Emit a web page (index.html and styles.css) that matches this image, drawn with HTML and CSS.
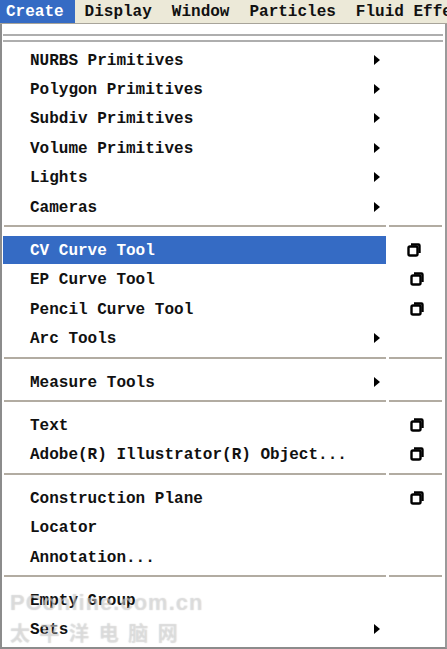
FILE: index.html
```html
<!DOCTYPE html>
<html lang="en">
  <head>
    <meta charset="UTF-8" />
    <title>Create Menu</title>
    <link rel="stylesheet" href="styles.css">
  </head>
  <body>
    <div class="menubar">
      <span class="menubar-item active">Create</span>
      <span class="menubar-item">Display</span>
      <span class="menubar-item">Window</span>
      <span class="menubar-item">Particles</span>
      <span class="menubar-item">Fluid Effects</span>
    </div>

    <div class="menu">
      <div class="tearoff"></div>

      <div class="item"><span class="label">NURBS Primitives</span><span class="arrow"></span><span class="opt"></span></div>
      <div class="item"><span class="label">Polygon Primitives</span><span class="arrow"></span><span class="opt"></span></div>
      <div class="item"><span class="label">Subdiv Primitives</span><span class="arrow"></span><span class="opt"></span></div>
      <div class="item"><span class="label">Volume Primitives</span><span class="arrow"></span><span class="opt"></span></div>
      <div class="item"><span class="label">Lights</span><span class="arrow"></span><span class="opt"></span></div>
      <div class="item"><span class="label">Cameras</span><span class="arrow"></span><span class="opt"></span></div>

      <div class="sep"><span></span><span></span></div>

      <div class="item selected"><span class="label">CV Curve Tool</span><span class="opt">
        <svg viewBox="0 0 14 14" width="14" height="14"><path d="M4 1.5h7.5a1 1 0 0 1 1 1V10" fill="none" stroke="#000" stroke-width="2.4"/><rect x="1.5" y="3.5" width="9" height="9" rx="1.5" fill="#fff" stroke="#000" stroke-width="2.4"/></svg>
      </span></div>
      <div class="item"><span class="label">EP Curve Tool</span><span class="opt">
        <svg viewBox="0 0 14 14" width="14" height="14"><path d="M4 1.5h7.5a1 1 0 0 1 1 1V10" fill="none" stroke="#000" stroke-width="2.4"/><rect x="1.5" y="3.5" width="9" height="9" rx="1.5" fill="#fff" stroke="#000" stroke-width="2.4"/></svg>
      </span></div>
      <div class="item"><span class="label">Pencil Curve Tool</span><span class="opt">
        <svg viewBox="0 0 14 14" width="14" height="14"><path d="M4 1.5h7.5a1 1 0 0 1 1 1V10" fill="none" stroke="#000" stroke-width="2.4"/><rect x="1.5" y="3.5" width="9" height="9" rx="1.5" fill="#fff" stroke="#000" stroke-width="2.4"/></svg>
      </span></div>
      <div class="item"><span class="label">Arc Tools</span><span class="arrow"></span><span class="opt"></span></div>

      <div class="sep"><span></span><span></span></div>

      <div class="item"><span class="label">Measure Tools</span><span class="arrow"></span><span class="opt"></span></div>

      <div class="sep"><span></span><span></span></div>

      <div class="item"><span class="label">Text</span><span class="opt">
        <svg viewBox="0 0 14 14" width="14" height="14"><path d="M4 1.5h7.5a1 1 0 0 1 1 1V10" fill="none" stroke="#000" stroke-width="2.4"/><rect x="1.5" y="3.5" width="9" height="9" rx="1.5" fill="#fff" stroke="#000" stroke-width="2.4"/></svg>
      </span></div>
      <div class="item"><span class="label">Adobe(R) Illustrator(R) Object...</span><span class="opt">
        <svg viewBox="0 0 14 14" width="14" height="14"><path d="M4 1.5h7.5a1 1 0 0 1 1 1V10" fill="none" stroke="#000" stroke-width="2.4"/><rect x="1.5" y="3.5" width="9" height="9" rx="1.5" fill="#fff" stroke="#000" stroke-width="2.4"/></svg>
      </span></div>

      <div class="sep"><span></span><span></span></div>

      <div class="item"><span class="label">Construction Plane</span><span class="opt">
        <svg viewBox="0 0 14 14" width="14" height="14"><path d="M4 1.5h7.5a1 1 0 0 1 1 1V10" fill="none" stroke="#000" stroke-width="2.4"/><rect x="1.5" y="3.5" width="9" height="9" rx="1.5" fill="#fff" stroke="#000" stroke-width="2.4"/></svg>
      </span></div>
      <div class="item"><span class="label">Locator</span><span class="opt"></span></div>
      <div class="item"><span class="label">Annotation...</span><span class="opt"></span></div>

      <div class="sep"><span></span><span></span></div>

      <div class="item"><span class="label">Empty Group</span><span class="opt"></span></div>
      <div class="item"><span class="label">Sets</span><span class="arrow"></span><span class="opt"></span></div>

      <div class="watermark">
        <span class="wm-top">PConline.com.cn</span>
        <span class="wm-bottom">太 平 洋 电 脑 网</span>
      </div>
    </div>
  </body>
</html>
```

FILE: styles.css
```css
body {
  margin: 0;
  width: 447px;
  height: 649px;
  overflow: hidden;
  background: #fff;
  font-family: "Liberation Mono", monospace;
  font-size: 16px;
  font-weight: bold;
  color: #111;
}
.menubar {
  display: flex;
  height: 23px;
  background: #ece9d8;
  border-bottom: 1px solid #a8a49a;
  white-space: nowrap;
  overflow: hidden;
}
.menubar-item {
  display: flex;
  align-items: center;
  padding: 1px 10px 0;
  line-height: 22px;
}
.menubar-item.active {
  padding: 1px 11px 0 6px;
  background: #356bc4;
  color: #fff;
}
.menu {
  position: relative;
  height: 623px;
  border-left: 2px solid #8c8c8c;
  border-right: 2px solid #9a9a9a;
  border-bottom: 2px solid #8c8c8c;
  display: flex;
  flex-direction: column;
}
.tearoff {
  height: 8px;
  margin: 10px 2px 3px 1px;
  border-top: 2px solid #aeaeae;
  border-bottom: 2px solid #aeaeae;
  box-sizing: border-box;
}
.item {
  display: flex;
  align-items: center;
  height: 29.4px;
  flex: none;
}
.label {
  flex: 1;
  margin-left: 1px;
  padding: 2px 0 0 27px;
  line-height: 20px;
  white-space: nowrap;
}
.item.selected .label {
  flex: none;
  width: 383px;
  height: 28px;
  box-sizing: border-box;
  line-height: 26px;
  background: #356bc4;
  color: #fff;
}
.arrow {
  width: 0;
  height: 0;
  margin: 0 9px 0 0;
  border-top: 5px solid transparent;
  border-bottom: 5px solid transparent;
  border-left: 6px solid #000;
}
.opt {
  flex: none;
  width: 56px;
  display: flex;
  justify-content: center;
}
.sep {
  display: flex;
  gap: 3px;
  margin: 4px 3px 8px 2px;
  flex: none;
}
.sep span {
  height: 2px;
  background: #b2aca2;
}
.sep span:first-child {
  width: 382px;
}
.sep span:last-child {
  flex: 1;
}
.watermark {
  position: absolute;
  left: 8px;
  top: 566px;
  display: flex;
  flex-direction: column;
  font-family: "Liberation Sans", "Noto Sans CJK SC", sans-serif;
  font-weight: bold;
  color: rgba(255, 255, 255, 0.35);
  text-shadow: 0 0 1px rgba(130, 130, 130, 0.45);
  pointer-events: none;
}
.wm-top {
  font-size: 22px;
  letter-spacing: 1px;
}
.wm-bottom {
  font-size: 20px;
  letter-spacing: 2px;
  margin-top: 2px;
}
```
